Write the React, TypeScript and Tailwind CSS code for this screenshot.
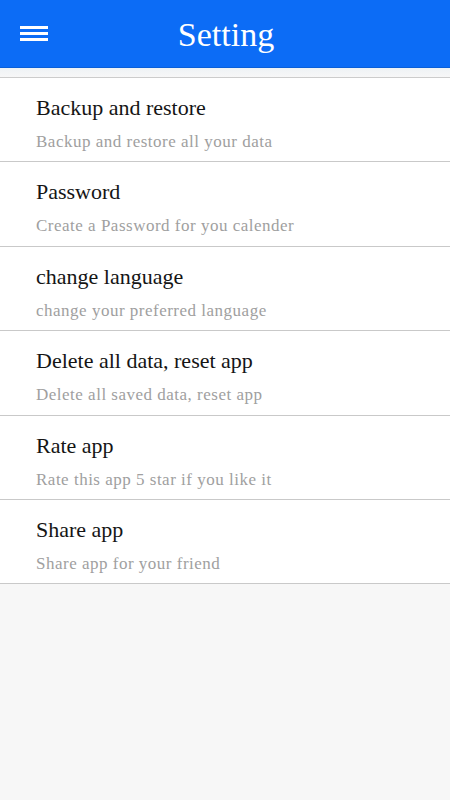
import React from 'react';

const items = [
  { title: 'Backup and restore', sub: 'Backup and restore all your data' },
  { title: 'Password', sub: 'Create a Password for you calender' },
  { title: 'change language', sub: 'change your preferred language' },
  { title: 'Delete all data, reset app', sub: 'Delete all saved data, reset app' },
  { title: 'Rate app', sub: 'Rate this app 5 star if you like it' },
  { title: 'Share app', sub: 'Share app for your friend' },
];

export default function App() {
  return (
    <div
      className="w-[450px] h-[800px] bg-[#f7f7f7] flex flex-col overflow-hidden"
      style={{ fontFamily: '"Liberation Serif", "Times New Roman", serif' }}
    >
      {/* Header */}
      <div className="h-[68px] bg-[#0c6cf6] border-b border-[#0a5fd8] flex items-center relative shrink-0">
        <button className="absolute left-[20px] top-[26px] flex flex-col gap-[3px]">
          <span className="block w-[28px] h-[3px] bg-white" />
          <span className="block w-[28px] h-[3px] bg-white" />
          <span className="block w-[28px] h-[3px] bg-white" />
        </button>
        <h1 className="w-full text-center text-white text-[34px] leading-none pl-[2px] pt-[2px]">Setting</h1>
      </div>

      <div className="h-[9px] bg-gradient-to-b from-[#eef2f5] to-[#f7f7f7] shrink-0" />

      {/* List */}
      <div className="border-t border-[#cccccc] bg-white">
        {items.map((it) => (
          <div key={it.title} className="h-[84.4px] border-b border-[#c9c9c9] pl-[36px] pt-[18px]">
            <div className="text-[22px] leading-[24px] text-[#151515]">{it.title}</div>
            <div className="text-[17px] leading-[20px] text-[#a0a0a0] mt-[12px] tracking-[0.5px]">{it.sub}</div>
          </div>
        ))}
      </div>
    </div>
  );
}
